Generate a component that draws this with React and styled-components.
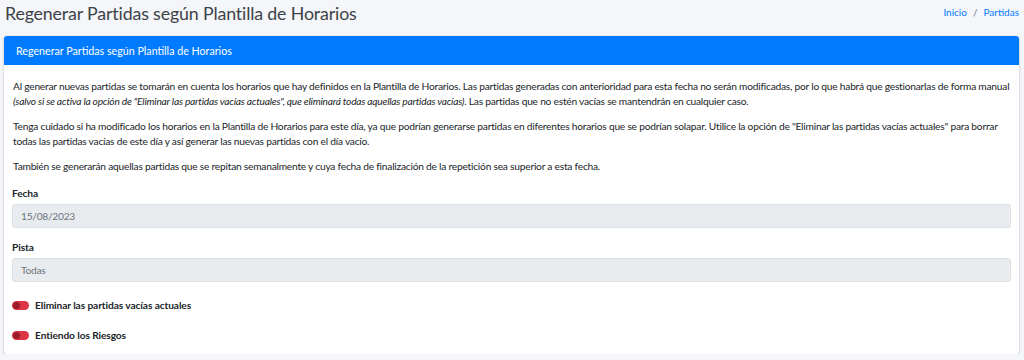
import React from "react";
import styled, { createGlobalStyle } from "styled-components";

const Global = createGlobalStyle`
  html, body { margin: 0; padding: 0; }
  body {
    background: #f4f6f9;
    font-family: "Lato", "Liberation Sans", sans-serif;
    color: #212529;
  }
`;

const Header = styled.div`
  display: flex;
  justify-content: space-between;
  align-items: flex-start;
  padding: 1px 5px 0 5px;
  height: 36px;
  box-sizing: border-box;
`;

const Title = styled.h1`
  margin: 0;
  font-size: 17.8px;
  letter-spacing: -0.15px;
  font-weight: 400;
  color: #3d4248;
  line-height: 24px;
`;

const Crumbs = styled.ol`
  display: flex;
  gap: 6px;
  list-style: none;
  margin: 0;
  padding: 4px 0 0;
  font-size: 10px;
  line-height: 14px;
  a { color: #007bff; text-decoration: none; }
`;

const Sep = styled.li`
  color: #6c757d;
`;

const Card = styled.section`
  margin: 0 5px 0 4px;
  background: #fff;
  border-radius: 3px;
  box-shadow: 0 0 1px rgba(0, 0, 0, 0.125), 0 1px 3px rgba(0, 0, 0, 0.2);
  overflow: hidden;
`;

const CardHead = styled.div`
  background: #007bff;
  color: #fff;
  height: 29px;
  display: flex;
  align-items: center;
  padding: 0 12px;
  font-size: 10.7px;
`;

const CardBody = styled.div`
  padding: 14px 8px 12px;
  display: flex;
  flex-direction: column;
`;

const Para = styled.p`
  margin: 0 0 10px;
  padding: 0 1px;
  font-size: 10.2px;
  letter-spacing: -0.22px;
  line-height: 15px;
  color: #212529;
  em { font-style: italic; }
`;

const Field = styled.div`
  display: flex;
  flex-direction: column;
  gap: 4px;
  margin-top: ${(p) => p.$top}px;
`;

const Label = styled.label`
  font-size: 10.2px;
  letter-spacing: -0.1px;
  font-weight: 700;
  line-height: 14px;
`;

const Input = styled.div`
  height: 24px;
  box-sizing: border-box;
  background: #e9ecef;
  border: 1px solid #dde1e5;
  border-radius: 3px;
  display: flex;
  align-items: center;
  padding: 0 8px;
  font-size: 10.2px;
  letter-spacing: -0.25px;
  color: #6c757d;
`;

const SwitchRow = styled.div`
  display: flex;
  align-items: center;
  gap: 6px;
  height: 14px;
  margin: ${(p) => p.$top}px 0 0;
  font-size: 10.2px;
  letter-spacing: -0.1px;
  font-weight: 700;
`;

const Track = styled.span`
  position: relative;
  width: 17px;
  height: 9px;
  border-radius: 5px;
  background: #dc3545;
  flex: none;
`;

const Knob = styled.span`
  position: absolute;
  left: 1px;
  top: 1px;
  width: 7px;
  height: 7px;
  border-radius: 50%;
  background: #9c1c2b;
`;

const Switch = ({ label, top }) => (
  <SwitchRow $top={top}>
    <Track>
      <Knob />
    </Track>
    {label}
  </SwitchRow>
);

export default function App() {
  return (
    <>
      <Global />
      <Header>
        <Title>Regenerar Partidas según Plantilla de Horarios</Title>
        <Crumbs>
          <li><a href="#">Inicio</a></li>
          <Sep>/</Sep>
          <li><a href="#">Partidas</a></li>
        </Crumbs>
      </Header>
      <Card>
        <CardHead>Regenerar Partidas según Plantilla de Horarios</CardHead>
        <CardBody>
          <Para>
            Al generar nuevas partidas se tomarán en cuenta los horarios que hay definidos en la Plantilla de Horarios. Las partidas generadas con anterioridad para esta fecha no serán modificadas, por lo que habrá que gestionarlas de forma manual{" "}
            <em>(salvo si se activa la opción de "Eliminar las partidas vacías actuales", que eliminará todas aquellas partidas vacías)</em>. Las partidas que no estén vacías se mantendrán en cualquier caso.
          </Para>
          <Para>
            Tenga cuidado si ha modificado los horarios en la Plantilla de Horarios para este día, ya que podrían generarse partidas en diferentes horarios que se podrían solapar. Utilice la opción de "Eliminar las partidas vacías actuales" para borrar todas las partidas vacías de este día y así generar las nuevas partidas con el día vacío.
          </Para>
          <Para>
            También se generarán aquellas partidas que se repitan semanalmente y cuya fecha de finalización de la repetición sea superior a esta fecha.
          </Para>
          <Field $top={2}>
            <Label>Fecha</Label>
            <Input>15/08/2023</Input>
          </Field>
          <Field $top={12}>
            <Label>Pista</Label>
            <Input>Todas</Input>
          </Field>
          <Switch label="Eliminar las partidas vacías actuales" top={16} />
          <Switch label="Entiendo los Riesgos" top={16} />
        </CardBody>
      </Card>
    </>
  );
}
